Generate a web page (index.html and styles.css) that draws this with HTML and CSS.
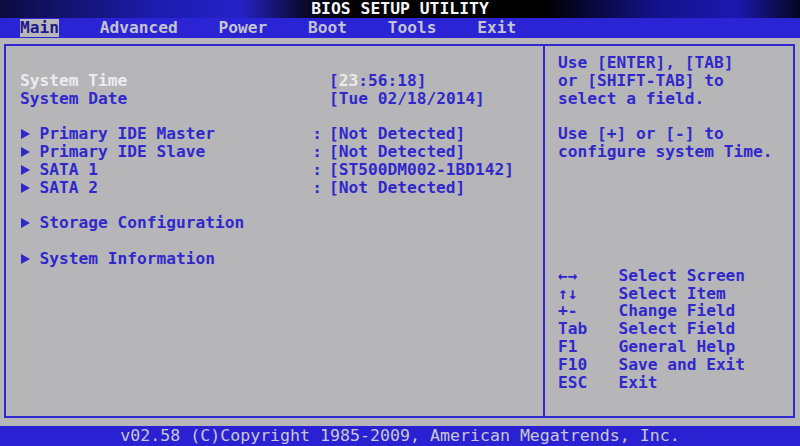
FILE: index.html
```html
<!DOCTYPE html>
<html lang="en">
<head>
  <meta charset="UTF-8" />
  <meta name="viewport" content="width=device-width, initial-scale=1" />
  <title>BIOS Setup Utility</title>
  <link rel="stylesheet" href="styles.css">
</head>
<body>
  <header class="title-bar">BIOS SETUP UTILITY</header>

  <nav class="menu-bar">
    <span class="menu-item active">Main</span>
    <span class="menu-item">Advanced</span>
    <span class="menu-item">Power</span>
    <span class="menu-item">Boot</span>
    <span class="menu-item">Tools</span>
    <span class="menu-item">Exit</span>
  </nav>

  <main class="screen">
    <div class="frame">
      <section class="settings">
        <div class="group">
          <div class="row">
            <span class="name plain current">System Time</span>
            <span class="value">[<span class="current">23</span>:56:18]</span>
          </div>
          <div class="row">
            <span class="name plain">System Date</span>
            <span class="value">[Tue 02/18/2014]</span>
          </div>
        </div>

        <div class="group">
          <div class="row">
            <span class="arrow"></span>
            <span class="name">Primary IDE Master</span>
            <span class="sep">:</span>
            <span class="value">[Not Detected]</span>
          </div>
          <div class="row">
            <span class="arrow"></span>
            <span class="name">Primary IDE Slave</span>
            <span class="sep">:</span>
            <span class="value">[Not Detected]</span>
          </div>
          <div class="row">
            <span class="arrow"></span>
            <span class="name">SATA 1</span>
            <span class="sep">:</span>
            <span class="value">[ST500DM002-1BD142]</span>
          </div>
          <div class="row">
            <span class="arrow"></span>
            <span class="name">SATA 2</span>
            <span class="sep">:</span>
            <span class="value">[Not Detected]</span>
          </div>
        </div>

        <div class="group">
          <div class="row">
            <span class="arrow"></span>
            <span class="name">Storage Configuration</span>
          </div>
        </div>

        <div class="group">
          <div class="row">
            <span class="arrow"></span>
            <span class="name">System Information</span>
          </div>
        </div>
      </section>

      <aside class="help">
        <p class="help-text">Use [ENTER], [TAB]<br>or [SHIFT-TAB] to<br>select a field.</p>
        <p class="help-text">Use [+] or [-] to<br>configure system Time.</p>

        <ul class="keys">
          <li><span class="key">←→</span>Select Screen</li>
          <li><span class="key">↑↓</span>Select Item</li>
          <li><span class="key">+-</span>Change Field</li>
          <li><span class="key">Tab</span>Select Field</li>
          <li><span class="key">F1</span>General Help</li>
          <li><span class="key">F10</span>Save and Exit</li>
          <li><span class="key">ESC</span>Exit</li>
        </ul>
      </aside>
    </div>
  </main>

  <footer class="footer">v02.58 (C)Copyright 1985-2009, American Megatrends, Inc.</footer>
</body>
</html>
```

FILE: styles.css
```css
body {
  margin: 0;
  height: 446px;
  display: flex;
  flex-direction: column;
  overflow: hidden;
  background: #b6b6b8;
  font-family: "DejaVu Sans Mono", "Liberation Mono", monospace;
  font-size: 16.2px;
  font-weight: 700;
  color: #3128cc;
}

.title-bar {
  height: 18px;
  line-height: 18px;
  text-align: center;
  color: #f4f4f8;
  font-size: 16.4px;
  background: linear-gradient(to right, #0c0c40 0%, #1d1cb0 20%, #2622c8 30%, #0a0a2a 38%, #000 45%, #000 68%, #14128a 82%, #1c18b0 92%, #050520 100%);
}

.menu-bar {
  height: 20px;
  display: flex;
  gap: calc(4ch + 1.8px);
  padding-left: 20px;
  background: #2b24d4;
  color: #c4c4d0;
  line-height: 20px;
}

.menu-item.active {
  background: #b8b8ba;
  color: #1e1a8c;
  margin: 1px 0;
  line-height: 18px;
}

.screen {
  flex: 1;
  display: flex;
}

.frame {
  flex: 1;
  display: flex;
  margin: 6px 5px 8px 4px;
  border: 2px solid #3028cc;
}

.settings {
  width: 523px;
  padding: 26px 0 0 14px;
  border-right: 2px solid #3028cc;
  line-height: 17.8px;
}

.group + .group {
  margin-top: 17.8px;
}

.row {
  display: flex;
  white-space: pre;
}

.arrow {
  width: 2ch;
  display: flex;
  align-items: center;
}

.arrow::before {
  content: "";
  margin-left: 1px;
  border-left: 9px solid #3128cc;
  border-top: 5px solid transparent;
  border-bottom: 5px solid transparent;
}

.name {
  width: 28ch;
}

.name.plain {
  width: 31.7ch;
}

.sep {
  width: 1.7ch;
}

.current {
  color: #ececf0;
}

.help {
  flex: 1;
  padding: 8px 0 0 13px;
  line-height: 17.8px;
}

.help-text {
  margin: 0 0 17.8px;
}

.keys {
  list-style: none;
  margin: 106px 0 0;
  padding: 0;
}

.keys li {
  display: flex;
}

.key {
  width: 6.2ch;
}

.footer {
  height: 20px;
  line-height: 20px;
  text-align: center;
  background: #2a22d2;
  color: #c8c8d4;
  font-weight: 400;
  font-size: 16.6px;
}
```
